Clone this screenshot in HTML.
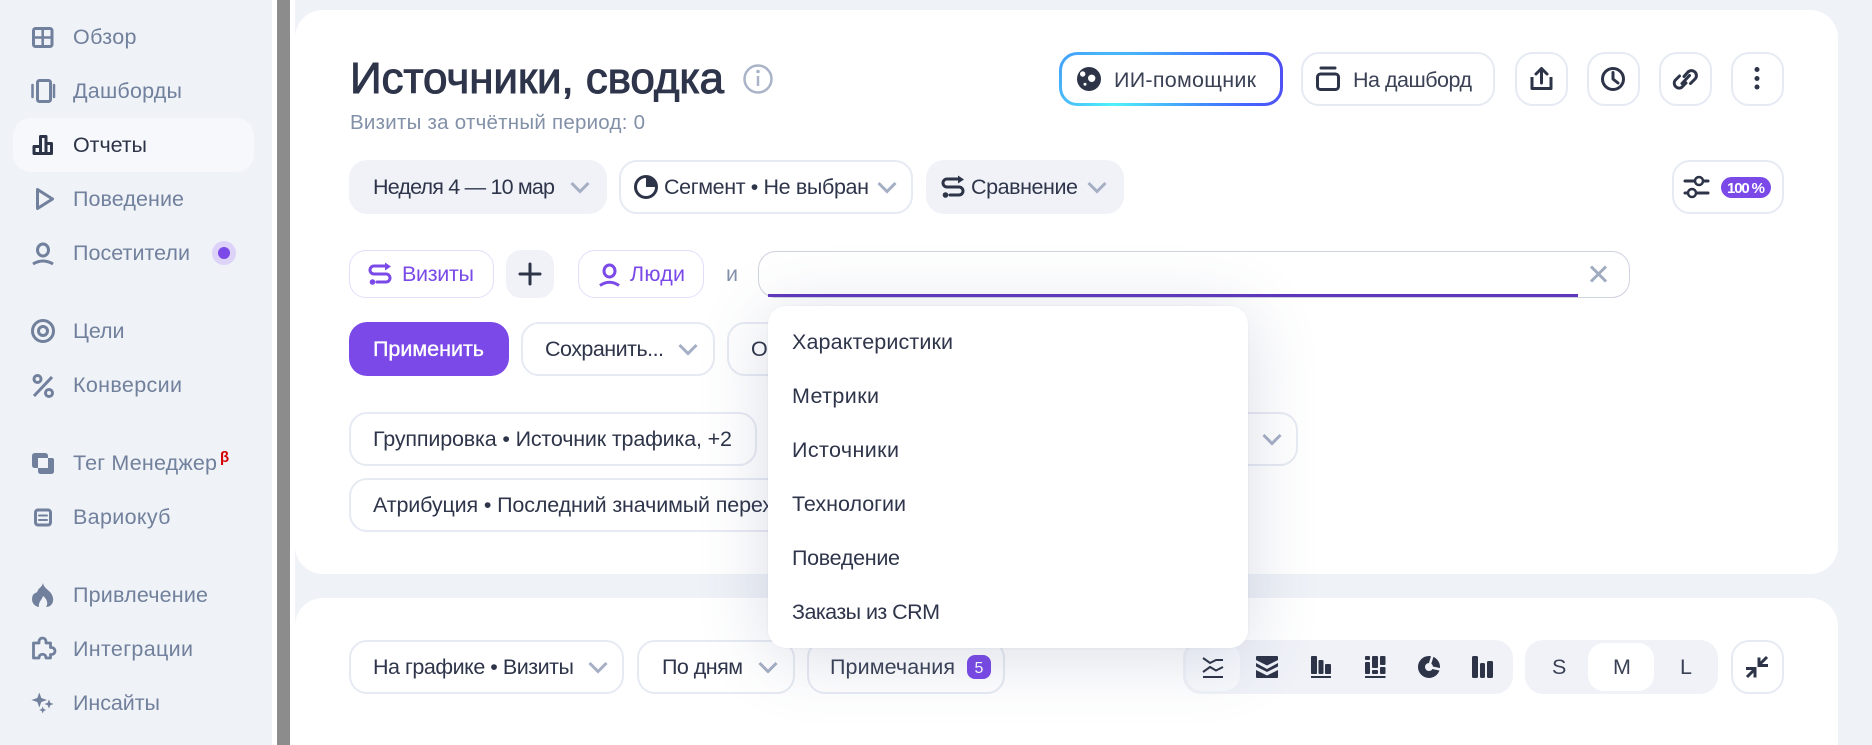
<!DOCTYPE html>
<html lang="ru">
<head>
<meta charset="utf-8">
<title>Источники, сводка</title>
<style>
html,body{margin:0;padding:0;width:1872px;height:745px;overflow:hidden;background:#eff2f7;font-family:"Liberation Sans",sans-serif}
#w{position:relative;width:1872px;height:745px;overflow:hidden}
.b{position:absolute;box-sizing:border-box}
.o{background:#fff;border:2px solid #e6eaf2}
.f{background:#f0f2f8}
.p{background:#fff;border:1.5px solid #e5dcfb}
svg{position:absolute;left:0;top:0}
text{font-family:"Liberation Sans",sans-serif;font-size:21.5px;fill:#2e354a}
.n text{fill:#71809c}
.ch{fill:none;stroke:#a5afc4;stroke-width:3}
.i{fill:none;stroke:#2d3448;stroke-width:3;stroke-linecap:round;stroke-linejoin:round}
.g{fill:none;stroke:#71809c;stroke-width:3;stroke-linecap:round;stroke-linejoin:round}
.v{fill:none;stroke:#7a49e8;stroke-width:3;stroke-linecap:round;stroke-linejoin:round}
</style>
</head>
<body>
<div id="w">
<!-- sidebar and main background -->
<div class="b" style="left:0;top:0;width:272px;height:745px;background:#eff2f7"></div>
<div class="b" style="left:272px;top:0;width:23px;height:745px;background:#fff"></div>
<div class="b" style="left:277px;top:0;width:13px;height:745px;background:#8c8c8c"></div>
<div class="b" style="left:13px;top:118px;width:241px;height:54px;border-radius:18px;background:#f6f8fc"></div>
<div class="b" style="left:295px;top:0;width:1577px;height:745px;background:#eff2f7"></div>

<!-- cards -->
<div class="b" style="left:295px;top:10px;width:1543px;height:564px;border-radius:28px;background:#fff"></div>
<div class="b" style="left:295px;top:598px;width:1543px;height:147px;border-radius:28px 28px 0 0;background:#fff"></div>

<!-- header buttons -->
<div class="b o" style="left:1301px;top:52px;width:194px;height:54px;border-radius:18px"></div>
<div class="b o" style="left:1515px;top:52px;width:53px;height:54px;border-radius:18px"></div>
<div class="b o" style="left:1587px;top:52px;width:53px;height:54px;border-radius:18px"></div>
<div class="b o" style="left:1659px;top:52px;width:53px;height:54px;border-radius:18px"></div>
<div class="b o" style="left:1731px;top:52px;width:53px;height:54px;border-radius:18px"></div>

<!-- row 1 -->
<div class="b f" style="left:349px;top:160px;width:258px;height:54px;border-radius:18px"></div>
<div class="b o" style="left:619px;top:160px;width:294px;height:54px;border-radius:18px"></div>
<div class="b f" style="left:926px;top:160px;width:198px;height:54px;border-radius:18px"></div>
<div class="b o" style="left:1672px;top:160px;width:112px;height:54px;border-radius:18px"></div>
<div class="b" style="left:1721px;top:177px;width:50px;height:21px;border-radius:11px;background:#7a49e8"></div>

<!-- filter row -->
<div class="b p" style="left:349px;top:250px;width:145px;height:48px;border-radius:17px"></div>
<div class="b f" style="left:506px;top:250px;width:48px;height:48px;border-radius:15px"></div>
<div class="b p" style="left:578px;top:250px;width:126px;height:48px;border-radius:17px"></div>
<div class="b" style="left:758px;top:251px;width:872px;height:47px;border-radius:18px;border:1.5px solid #cfd2e0;background:#fff"></div>
<div class="b" style="left:768px;top:294px;width:810px;height:3px;background:#5f37bd"></div>

<!-- row 3 -->
<div class="b" style="left:349px;top:322px;width:160px;height:54px;border-radius:18px;background:#7a49e8"></div>
<div class="b o" style="left:521px;top:322px;width:194px;height:54px;border-radius:18px"></div>
<div class="b o" style="left:727px;top:322px;width:200px;height:54px;border-radius:18px"></div>

<!-- groupings -->
<div class="b o" style="left:349px;top:412px;width:408px;height:54px;border-radius:18px"></div>
<div class="b o" style="left:769px;top:412px;width:529px;height:54px;border-radius:18px"></div>
<div class="b o" style="left:349px;top:478px;width:700px;height:54px;border-radius:18px"></div>

<!-- card 2 controls -->
<div class="b o" style="left:349px;top:640px;width:275px;height:54px;border-radius:18px"></div>
<div class="b o" style="left:637px;top:640px;width:158px;height:54px;border-radius:18px"></div>
<div class="b o" style="left:807px;top:640px;width:198px;height:54px;border-radius:18px"></div>
<div class="b" style="left:967px;top:655px;width:24px;height:24px;border-radius:8px;background:#7a49e8"></div>
<div class="b f" style="left:1183px;top:640px;width:330px;height:54px;border-radius:18px"></div>
<div class="b" style="left:1186px;top:643px;width:54px;height:48px;border-radius:16px;background:#f7f9fc"></div>
<div class="b f" style="left:1525px;top:640px;width:193px;height:54px;border-radius:18px"></div>
<div class="b" style="left:1588px;top:643px;width:66px;height:48px;border-radius:16px;background:#fff"></div>
<div class="b o" style="left:1731px;top:640px;width:53px;height:54px;border-radius:18px"></div>

<svg width="1872" height="745" viewBox="0 0 1872 745" xmlns="http://www.w3.org/2000/svg">
<defs>
<radialGradient id="ai" gradientUnits="userSpaceOnUse" cx="1113" cy="108" r="190">
<stop offset="0" stop-color="#50f4f8"/><stop offset=".45" stop-color="#4390fb"/><stop offset=".7" stop-color="#4464ff"/><stop offset="1" stop-color="#5548f0"/>
</radialGradient>
</defs>

<!-- sidebar text -->
<g class="n">
<text x="73" y="44" textLength="63.5">Обзор</text>
<text x="73" y="98" textLength="109">Дашборды</text>
<text x="73" y="152" textLength="74" style="fill:#2d3448">Отчеты</text>
<text x="73" y="206" textLength="111">Поведение</text>
<text x="73" y="260" textLength="117">Посетители</text>
<text x="73" y="338" textLength="51.5">Цели</text>
<text x="73" y="392" textLength="109">Конверсии</text>
<text x="73" y="470" textLength="144">Тег Менеджер</text>
<text x="220" y="462" style="font-size:15px;font-weight:700;fill:#d40000">β</text>
<text x="73" y="524" textLength="97.5">Вариокуб</text>
<text x="73" y="602" textLength="135">Привлечение</text>
<text x="73" y="656" textLength="120">Интеграции</text>
<text x="73" y="710" textLength="87">Инсайты</text>
</g>
<circle cx="224" cy="253" r="12" fill="#ddd2f8"/><circle cx="224" cy="253" r="6" fill="#7a49e8"/>

<!-- sidebar icons -->
<g class="g">
<rect x="33.500" y="28.500" width="18.500" height="18" rx="2"/><path d="M42.700 28.500V46.500M33.500 37.500H52" stroke-linecap="butt" stroke-width="2.500"/>
<rect x="37.500" y="80.500" width="13" height="21" rx="2"/><path d="M32.500 85V97M54 85V97" stroke-width="2.500"/>
<path d="M37.500 189.500L52.500 199L37.500 208.500Z"/>
<ellipse cx="43" cy="250" rx="5.500" ry="6"/><path d="M33 264Q43 258 53 264" stroke-linecap="butt"/>
<circle cx="43" cy="331" r="10.500"/><circle cx="43" cy="331" r="4.500"/>
<path d="M34 396L52 377" stroke-linecap="butt"/><circle cx="37.500" cy="379" r="3.500"/><circle cx="49" cy="393" r="3.500"/>
<rect x="35.500" y="510" width="15" height="15" rx="2.500"/><path d="M39 515.500H47M39 520H47" stroke-width="2"/>
<path d="M33.500 643H39V641.500A3.500 3.500 0 0 1 46 641.500V643H50.500V647.500H51.500A3.500 3.500 0 0 1 51.500 654.500H50.500V658H46C46 653 39 653 39 658H33.500Z" stroke-width="2.800"/>
</g>
<path fill="#71809c" d="M35 453H45Q48 453 48 456V458H52Q54 458 54 460V471Q54 474 51 474H41Q38 474 38 471V468H35Q32 468 32 465V456Q32 453 35 453ZM38 458V468H48V458Z"/>
<path fill="#71809c" d="M43 583C44 589 50 590 52 595C55 601 52 607 46 607C49 603 46 598 43 596C42 600 38 602 39 607C33 606 31 601 32.500 596C34 592 37 594 38 590C39 588 42 587 43 583Z"/>
<path fill="#71809c" d="M39.300 692.500L41.300 698L47 700L41.300 702L39.300 707.500L37.300 702L31.500 700L37.300 698Z"/>
<path fill="#71809c" d="M49 699.500L50.300 702.700L53.500 704L50.300 705.300L49 708.500L47.700 705.300L44.500 704L47.700 702.700Z"/>
<path fill="#71809c" d="M42.700 706.500L43.700 709L46.200 710L43.700 711L42.700 713.500L41.700 711L39.200 710L41.700 709Z"/>
<path class="i" d="M34 146.500V153.500H51.500V143.500H46V136.500H40.500V146.500ZM40.500 146.500V153M46 143.500V153"/>

<!-- header -->
<text x="350" y="93" textLength="374" style="font-size:44px;fill:#2e354a;stroke:#2e354a;stroke-width:1px">Источники, сводка</text>
<circle cx="758" cy="79" r="13.500" fill="none" stroke="#a9b4c8" stroke-width="2.500"/>
<circle cx="758" cy="71.500" r="1.800" fill="#a9b4c8"/><path d="M758 76V86" stroke="#a9b4c8" stroke-width="2.500"/>
<text x="350" y="129" textLength="295" style="font-size:20.500px;fill:#8290a8">Визиты за отчётный период: 0</text>

<rect x="1060.500" y="53.500" width="221" height="51" rx="17" fill="#fff" stroke="url(#ai)" stroke-width="3"/>
<circle cx="1089" cy="79" r="12" fill="#2d3448"/><circle cx="1091.700" cy="78.300" r="3.700" fill="#fff"/><circle cx="1082.700" cy="74" r="2.700" fill="#fff"/><circle cx="1085" cy="84.300" r="1.500" fill="#fff"/>
<text x="1114" y="87" textLength="142" style="fill:#3a4155">ИИ-помощник</text>
<g class="i"><path d="M1321 68H1335"/><rect x="1317.500" y="74" width="21" height="15.500" rx="3"/></g>
<text x="1353" y="87" textLength="119" style="fill:#3a4155">На дашборд</text>

<g class="i">
<path d="M1532 77V88.500H1551V77" stroke-linecap="butt"/><path d="M1541.500 83V69M1536 74L1541.500 68.500L1547 74"/>
<circle cx="1613" cy="79" r="10.500"/><path d="M1613 72.500V79L1618 83"/>
<path d="M1684 76.500L1688 72A4.950 4.950 0 0 1 1695 79L1690.500 83.500"/>
<path d="M1686 83L1681.500 87.500A4.950 4.950 0 0 1 1675 80.500L1679.500 76"/>
<path d="M1682 83.500L1689.500 75.500"/>
</g>
<g fill="#2d3448"><circle cx="1757" cy="69.500" r="2.500"/><circle cx="1757" cy="78.500" r="2.500"/><circle cx="1757" cy="87" r="2.500"/></g>

<!-- row 1 contents -->
<text x="373" y="194" textLength="182">Неделя 4 — 10 мар</text>
<path class="ch" d="M571.500 183L580 191.500L588.500 183"/>
<circle cx="646" cy="187" r="10.500" class="i"/><path d="M646 187V176A11 11 0 0 1 657 187Z" fill="#2d3448"/>
<text x="664" y="194" textLength="205">Сегмент • Не выбран</text>
<path class="ch" d="M878.500 183L887 191.500L895.500 183"/>
<g class="i" transform="translate(573,-87)"><path d="M386 266H374A4 4 0 0 0 374 274H386A4 4 0 0 1 386 282H377"/><path d="M385 262.500L391 266.500L385 270.500Z" fill="#2d3448" stroke="none"/><circle cx="372.500" cy="282" r="2.800" fill="#2d3448" stroke="none"/></g>
<text x="971" y="194" textLength="107">Сравнение</text>
<path class="ch" d="M1088.500 183L1097 191.500L1105.500 183"/>
<g class="i"><path d="M1685 181H1708M1685 193H1708"/></g>
<circle cx="1699" cy="181" r="4" fill="#fff" stroke="#2d3448" stroke-width="2.500"/><circle cx="1692" cy="193" r="4" fill="#fff" stroke="#2d3448" stroke-width="2.500"/>
<text x="1727" y="193" textLength="38" style="font-size:15px;font-weight:700;fill:#fff">100 %</text>

<!-- filter row contents -->
<g class="v"><path d="M386 266H374A4 4 0 0 0 374 274H386A4 4 0 0 1 386 282H377"/><path d="M385 262.500L391 266.500L385 270.500Z" fill="#7a49e8" stroke="none"/><circle cx="372.500" cy="282" r="2.800" fill="#7a49e8" stroke="none"/></g>
<text x="402" y="281" textLength="72" style="fill:#7a49e8">Визиты</text>
<path class="i" d="M520 274H540M530 264V284" stroke-linecap="butt"/>
<g class="v"><ellipse cx="609.500" cy="271" rx="5.500" ry="6"/><path d="M600 285.500Q609.500 279 619 285.500" stroke-linecap="butt"/></g>
<text x="630" y="281" textLength="55" style="fill:#7a49e8">Люди</text>
<text x="726" y="281" textLength="11" style="fill:#8290a8">и</text>
<path d="M1591 266.500L1606 281.500M1606 266.500L1591 281.500" stroke="#9fabbf" stroke-width="3" fill="none"/>

<!-- row 3 contents -->
<text x="373" y="356" textLength="111" style="fill:#fff;stroke:#fff;stroke-width:.35px">Применить</text>
<text x="545" y="356" textLength="119">Сохранить...</text>
<path class="ch" d="M679.500 345L688 353.500L696.500 345"/>
<text x="751" y="356">Очистить</text>

<text x="373" y="446" textLength="359">Группировка • Источник трафика, +2</text>
<path class="ch" d="M1263.500 435L1272 443.500L1280.500 435"/>
<text x="373" y="512" textLength="400">Атрибуция • Последний значимый перех</text>

<!-- card 2 contents -->
<text x="373" y="674" textLength="201">На графике • Визиты</text>
<path class="ch" d="M589.500 663L598 671.500L606.500 663"/>
<text x="662" y="674" textLength="81">По дням</text>
<path class="ch" d="M759.500 663L768 671.500L776.500 663"/>
<text x="830" y="674" textLength="125" style="fill:#3a4155">Примечания</text>
<text x="974.500" y="673" style="font-size:16px;fill:#fff">5</text>

<!-- chart types -->
<g fill="none" stroke="#2d3448" stroke-width="2">
<path d="M1203 658L1210 663L1216 660H1223"/><path d="M1203 672L1210 667L1216 670.500L1223 667"/><path d="M1203 677H1223"/>
</g>
<g fill="#2d3448">
<path d="M1257 656H1277Q1278 656 1278 657V660L1267 665.500L1256 660V657Q1256 656 1257 656Z"/>
<path d="M1256 663L1267 669L1278 663V666.500L1267 672L1256 666.500Z"/>
<path d="M1256 670L1267 675.500L1278 670V677Q1278 678 1277 678H1257Q1256 678 1256 677Z"/>
</g>
<g fill="#2d3448">
<rect x="1311" y="656" width="6" height="18" rx="1"/><rect x="1318.500" y="660" width="5" height="14" rx="1"/><rect x="1325" y="664" width="6" height="10" rx="1"/><rect x="1311" y="676" width="20" height="2"/>
<rect x="1365" y="656" width="5" height="4" rx="1"/><rect x="1365" y="662" width="5" height="12" rx="1"/><rect x="1372" y="656" width="6" height="12" rx="1"/><rect x="1372" y="670" width="6" height="4" rx="1"/><rect x="1380" y="656" width="5.500" height="9" rx="1"/><rect x="1380" y="667" width="5.500" height="7" rx="1"/><rect x="1365" y="676" width="20.500" height="2"/>
<rect x="1472" y="656" width="6" height="22" rx="1.500"/><rect x="1480" y="663" width="5" height="15" rx="1.500"/><rect x="1487" y="661" width="6" height="17" rx="1.500"/>
</g>
<circle cx="1429" cy="667" r="7.500" fill="none" stroke="#2d3448" stroke-width="7"/>
<path d="M1429 667L1433 654M1429 667L1443 670" stroke="#f0f2f8" stroke-width="2.500"/>

<!-- S M L -->
<text x="1552" y="674" textLength="12" style="fill:#3a4155">S</text>
<text x="1613" y="674" textLength="18" style="fill:#3a4155">M</text>
<text x="1680" y="674" textLength="11" style="fill:#3a4155">L</text>

<!-- compress -->
<g class="i" style="stroke-linecap:butt;stroke-linejoin:miter">
<path d="M1767 657L1760 664M1759 657.500V665.500H1768"/><path d="M1747 677L1754 670M1746 668.500H1755V677.500"/>
</g>
</svg>

<!-- dropdown -->
<div class="b" style="left:768px;top:306px;width:480px;height:342px;border-radius:18px;background:#fff;box-shadow:0 8px 70px rgba(70,85,130,.2),0 0 2px rgba(70,85,130,.08)">
<svg width="480" height="342" viewBox="768 306 480 342" xmlns="http://www.w3.org/2000/svg">
<text x="792" y="349" textLength="161">Характеристики</text>
<text x="792" y="403" textLength="87">Метрики</text>
<text x="792" y="457" textLength="107">Источники</text>
<text x="792" y="511" textLength="114">Технологии</text>
<text x="792" y="565" textLength="108">Поведение</text>
<text x="792" y="619" textLength="148">Заказы из CRM</text>
</svg>
</div>
</div>
</body>
</html>
